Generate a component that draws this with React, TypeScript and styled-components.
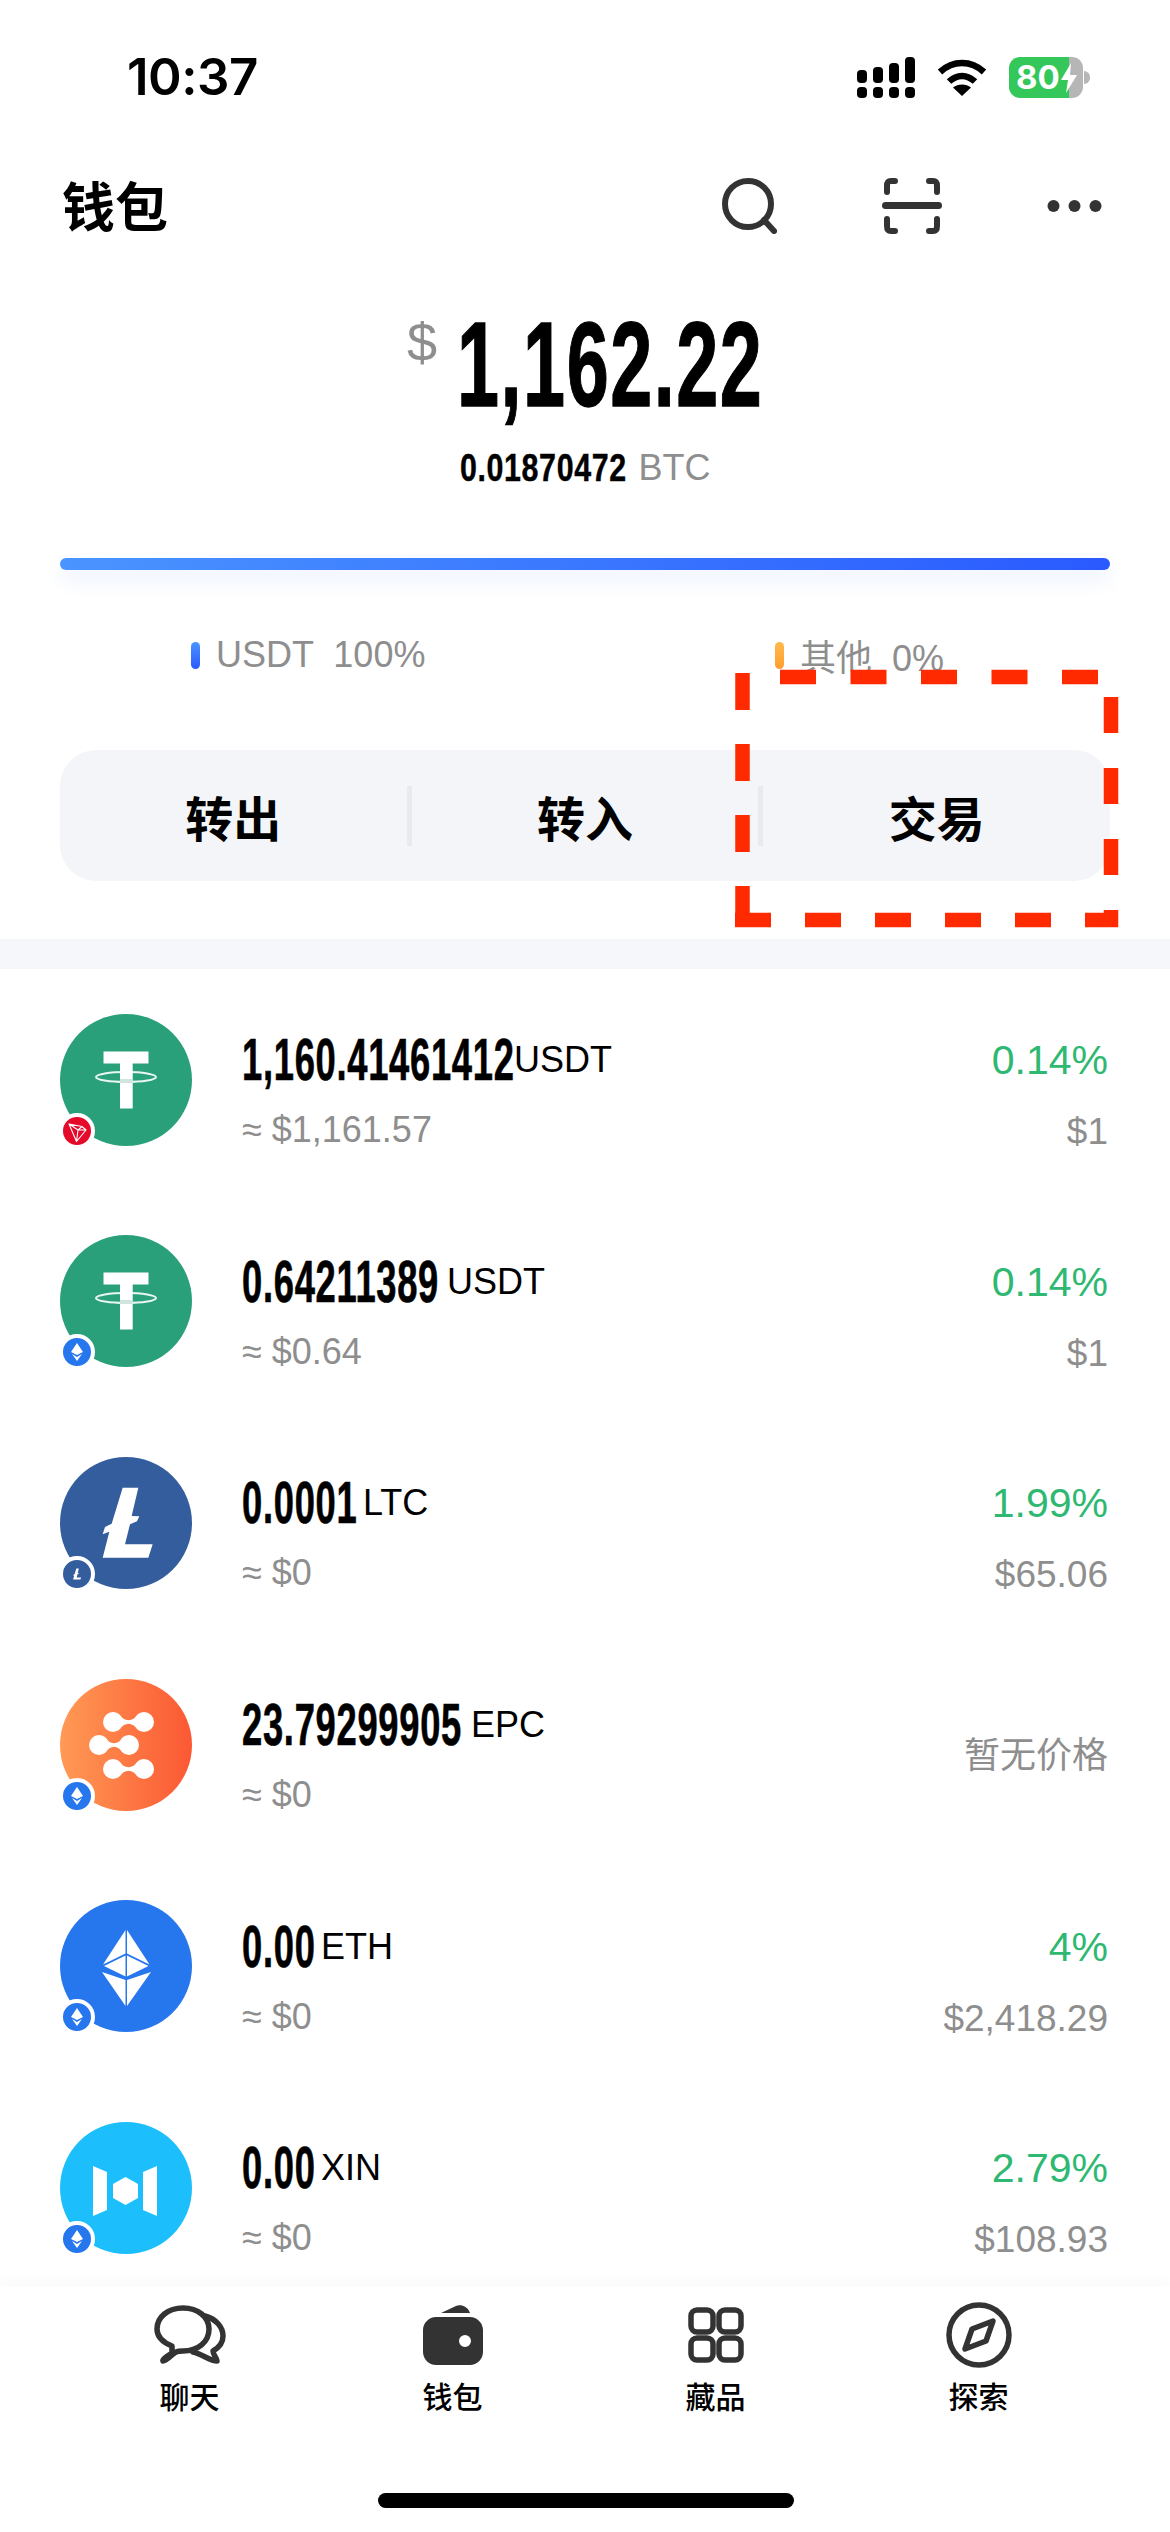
import React from "react";
import styled, { createGlobalStyle } from "styled-components";

const Global = createGlobalStyle`
  html, body { margin: 0; padding: 0; background: #fff; }
  body { font-family: "Liberation Sans", "Noto Sans CJK SC", sans-serif; }
`;

const Page = styled.div`
  position: relative;
  width: 1170px;
  height: 2532px;
  display: flex;
  flex-direction: column;
  overflow: hidden;
  background: #fff;
`;
const StatusBar = styled.div`
  height: 154px;
  flex: none;
  box-sizing: border-box;
  padding: 50px 80px 0 127px;
  display: flex;
  justify-content: space-between;
  align-items: flex-start;
`;
const Time = styled.div`
  font-family: Inter, "Liberation Sans", sans-serif;
  font-size: 51px;
  font-weight: 600;
  line-height: 54px;
  color: #000;
  letter-spacing: -0.5px;
`;
const StatusIcons = styled.div`
  height: 54px;
  display: flex;
  align-items: center;
  gap: 22px;
`;
const Battery = styled.div`
  position: relative;
  width: 74px;
  height: 41px;
  margin-right: 7px;
  border-radius: 11px;
  background: linear-gradient(90deg, #34c759 0 60px, #b6b6b6 60px);
  color: #fff;
  font-family: Inter, "Liberation Sans", sans-serif;
  font-weight: 700;
  font-size: 33px;
  line-height: 41px;
  padding-left: 7px;
  box-sizing: border-box;
  &::after {
    content: "";
    position: absolute;
    right: -7px;
    top: 14px;
    width: 6px;
    height: 13px;
    border-radius: 0 6px 6px 0;
    background: #b6b6b6;
  }
  svg { position: absolute; left: 50px; top: 6px; }
`;
const Header = styled.div`
  height: 104px;
  flex: none;
  box-sizing: border-box;
  padding: 0 68px 0 62px;
  display: flex;
  align-items: center;
  justify-content: space-between;
`;
const Title = styled.div`
  font-size: 53px;
  font-weight: 700;
  color: #000;
  margin-top: -5px;
`;
const HeaderActions = styled.div`
  display: flex;
  align-items: center;
  gap: 105px;
`;
const Balance = styled.div`
  display: flex;
  justify-content: center;
  gap: 20px;
  margin-top: 46px;
  height: 104px;
`;
const Currency = styled.div`
  font-size: 54px;
  line-height: 60px;
  color: #8e8e8e;
  margin-top: 8px;
`;
const Condensed = styled.div<{ $w: number; $scale: number; $size: number }>`
  width: ${(p) => p.$w}px;
  flex: none;
  font-family: "Liberation Sans", sans-serif;
  font-weight: 700;
  font-size: ${(p) => p.$size}px;
  line-height: 1;
  letter-spacing: 0.02em;
  color: #000;
  white-space: nowrap;
  transform: scaleX(${(p) => p.$scale});
  transform-origin: left center;
  -webkit-text-stroke: ${(p) => p.$size / 90}px #000;
`;
const BalanceSub = styled.div`
  display: flex;
  justify-content: center;
  align-items: center;
  gap: 12px;
  margin-top: 40px;
  height: 40px;
`;
const BtcUnit = styled.span`
  font-size: 36px;
  color: #8e8e8e;
`;
const Progress = styled.div`
  height: 12px;
  margin: 70px 60px 0;
  border-radius: 6px;
  background: linear-gradient(90deg, #4a94ff, #2a5aff);
  box-shadow: 0 10px 18px rgba(60, 110, 255, 0.1);
  flex: none;
`;
const Legend = styled.div`
  display: flex;
  margin-top: 65px;
  height: 40px;
  padding-left: 191px;
  align-items: center;
`;
const LegendItem = styled.div<{ $w: number }>`
  width: ${(p) => p.$w}px;
  display: flex;
  align-items: center;
  gap: 16px;
  font-size: 36px;
  color: #8e8e8e;
  white-space: pre;
`;
const LegendMark = styled.i<{ $from: string; $to: string }>`
  display: block;
  width: 9px;
  height: 27px;
  border-radius: 5px;
  background: linear-gradient(180deg, ${(p) => p.$from}, ${(p) => p.$to});
`;
const Actions = styled.div`
  height: 131px;
  flex: none;
  margin: 75px 60px 0;
  border-radius: 36px;
  background: #f3f5f8;
  display: flex;
  align-items: center;
`;
const ActionItem = styled.div`
  flex: 1;
  text-align: center;
  font-size: 48px;
  font-weight: 700;
  color: #000;
`;
const ActionDivider = styled.div`
  width: 5px;
  height: 60px;
  background: #e8eaee;
`;
const Band = styled.div`
  height: 30px;
  flex: none;
  margin-top: 58px;
  background: #f6f7fa;
`;
const List = styled.div`
  flex: 1;
  min-height: 0;
  overflow: hidden;
`;
const Row = styled.div`
  height: 221.67px;
  box-sizing: border-box;
  padding: 0 62px 0 60px;
  display: flex;
  align-items: center;
`;
const AvatarWrap = styled.div`
  position: relative;
  width: 132px;
  height: 132px;
  flex: none;
  margin-right: 50px;
`;
const AvatarDisc = styled.svg`
  display: block;
  width: 132px;
  height: 132px;
  border-radius: 50%;
`;
const Badge = styled.div<{ $bg: string }>`
  position: absolute;
  left: -1px;
  top: 99px;
  width: 28px;
  height: 28px;
  box-sizing: content-box;
  border: 4px solid #fff;
  border-radius: 50%;
  background: ${(p) => p.$bg};
  svg { display: block; width: 28px; height: 28px; }
`;
const Info = styled.div`
  flex: 1;
  align-self: flex-start;
  padding-top: 66px;
`;
const AmountLine = styled.div`
  height: 50px;
  display: flex;
  align-items: center;
  gap: 6px;
`;
const Unit = styled.span`
  font-size: 36px;
  color: #000;
`;
const Fiat = styled.div`
  margin-top: 25px;
  height: 40px;
  line-height: 40px;
  font-size: 36px;
  color: #8e8e8e;
`;
const Price = styled(Fiat)`
  margin-top: 27px;
  font-size: 37px;
`;
const Quote = styled.div`
  align-self: flex-start;
  padding-top: 66px;
  text-align: right;
`;
const Change = styled.div`
  height: 50px;
  line-height: 50px;
  font-size: 41px;
  color: #2eb872;
`;
const NoPrice = styled.div`
  margin-top: 31px;
  height: 50px;
  line-height: 50px;
  font-size: 36px;
  color: #8e8e8e;
`;
const TabBar = styled.div`
  position: relative;
  flex: none;
  height: 246px;
  box-sizing: border-box;
  background: #fff;
  box-shadow: 0 -6px 14px rgba(0, 0, 0, 0.025);
  padding: 16px 60px 0 58px;
  display: flex;
  flex-direction: column;
`;
const Tabs = styled.div`
  display: grid;
  grid-template-columns: repeat(4, 1fr);
  justify-items: center;
`;
const Tab = styled.div`
  display: flex;
  flex-direction: column;
  align-items: center;
  gap: 10px;
`;
const TabIcon = styled.div`
  height: 66px;
  display: flex;
  align-items: center;
  justify-content: center;
`;
const TabLabel = styled.div`
  font-size: 30px;
  line-height: 40px;
  font-weight: 500;
  color: #000;
`;
const HomeBar = styled.div`
  align-self: center;
  width: 416px;
  height: 15px;
  margin-top: 75px;
  margin-left: 4px;
  border-radius: 8px;
  background: #000;
`;
const Highlight = styled.svg`
  position: absolute;
  left: 730px;
  top: 665px;
  width: 395px;
  height: 270px;
`;

const Signal = () => (
  <svg width="58" height="41" viewBox="0 0 58 41" fill="#000">
    {[0, 16, 32, 48].map((x) => (
      <rect key={x} x={x} y="30" width="10" height="11" rx="4" />
    ))}
    <rect x="0" y="13" width="10" height="13" rx="4" />
    <rect x="16" y="10" width="10" height="16" rx="4" />
    <rect x="32" y="6" width="10" height="20" rx="4" />
    <rect x="48" y="0" width="10" height="26" rx="4" />
  </svg>
);
const Wifi = () => (
  <svg width="50" height="38" viewBox="0 0 50 38" fill="none">
    <path d="M3 14C16 2 34 2 47 14" stroke="#000" strokeWidth="6.5" />
    <path d="M12 23.5C20 16 30 16 38 23.5" stroke="#000" strokeWidth="6.5" />
    <path d="M25 38L16 29.5C21 25.5 29 25.5 34 29.5Z" fill="#000" />
  </svg>
);
const Search = () => (
  <svg width="56" height="56" viewBox="0 0 56 56" fill="none" stroke="#333" strokeWidth="6" strokeLinecap="round">
    <circle cx="27" cy="26" r="23" />
    <path d="M43 42L53 53" />
  </svg>
);
const Scan = () => (
  <svg width="60" height="56" viewBox="0 0 60 56" fill="none" stroke="#333" strokeWidth="6" strokeLinecap="round">
    <path d="M13 3H9C6 3 5 5 5 8V14" />
    <path d="M47 3H51C54 3 55 5 55 8V14" />
    <path d="M5 41V48C5 51 6 53 9 53H13" />
    <path d="M55 41V48C55 51 54 53 51 53H47" />
    <path d="M3.5 27.5H56.5" strokeWidth="7" />
  </svg>
);
const Dots = () => (
  <svg width="55" height="14" viewBox="0 0 55 14" fill="#333">
    <circle cx="6.5" cy="7" r="6" />
    <circle cx="27.5" cy="7" r="6" />
    <circle cx="48.5" cy="7" r="6" />
  </svg>
);
const ChatIcon = () => (
  <svg width="72" height="60" viewBox="0 0 72 60" fill="none" stroke="#333" strokeWidth="5.5" strokeLinecap="round" strokeLinejoin="round">
    <path d="M18 41C8 37 3 31 3 24C3 12 14 3 29 3C44 3 55 12 55 24C55 37 44 46 29 46C26 46 24 46 22 47C18 49 13 56 9 56C8 54 14 51 18 48Z" />
    <path d="M51 11C62 14 69 22 69 31C69 37 66 42 59 46C59 50 63 53 63 56C56 56 48 49 39 47" />
  </svg>
);
const WalletIcon = () => (
  <svg width="60" height="60" viewBox="0 0 60 60">
    <path d="M18 8L33 1C37 -1 45 1 47 8Z" fill="#333" />
    <path fillRule="evenodd" d="M13 12H47C54 12 60 18 60 25V47C60 54 54 60 47 60H13C6 60 0 54 0 47V25C0 18 6 12 13 12ZM36 36A6 6 0 1 0 48 36A6 6 0 1 0 36 36Z" fill="#333" />
  </svg>
);
const GridIcon = () => (
  <svg width="56" height="56" viewBox="0 0 56 56" fill="none" stroke="#333" strokeWidth="5.5">
    <rect x="3" y="3" width="22" height="22" rx="6" />
    <rect x="31" y="3" width="22" height="22" rx="6" />
    <rect x="3" y="31" width="22" height="22" rx="6" />
    <rect x="31" y="31" width="22" height="22" rx="6" />
  </svg>
);
const CompassIcon = () => (
  <svg width="66" height="66" viewBox="0 0 66 66" fill="none" stroke="#333" strokeWidth="5.5" strokeLinejoin="round">
    <circle cx="33" cy="33" r="30" />
    <path d="M47 19L40 39L19 47L26 27Z" />
  </svg>
);

const Tether = () => (
  <AvatarDisc viewBox="0 0 132 132">
    <rect width="132" height="132" fill="#2aa07a" />
    <path d="M43.5 37.5H88.5V49.5H72.7V94.5H60V49.5H43.5Z" fill="#fff" />
    <ellipse cx="66" cy="63" rx="30" ry="5" fill="none" stroke="#fff" strokeWidth="2" opacity="0.9" />
    <rect x="60" y="65" width="12.7" height="4" fill="#cfe5dd" />
  </AvatarDisc>
);
const LTC_PATH =
  "M248 140H295L275 225L298 226L291 241L270 250L255 310H338L325 350H188L208 272L188 280L195 258L215 248Z";
const Litecoin = () => (
  <AvatarDisc viewBox="60 48 396 396">
    <rect x="60" y="48" width="396" height="396" fill="#345d9d" />
    <path d={LTC_PATH} fill="#fff" />
  </AvatarDisc>
);
const EpcBlob = ({ x1, x2, y }: { x1: number; x2: number; y: number }) => (
  <>
    <circle cx={x1} cy={y} r="10" fill="#fff" />
    <circle cx={x2} cy={y} r="10" fill="#fff" />
    <path d={`M${x1 + 5} ${y - 8.5}Q${(x1 + x2) / 2} ${y + 5} ${x2 - 5} ${y - 8.5}V${y + 8.5}Q${(x1 + x2) / 2} ${y - 5} ${x1 + 5} ${y + 8.5}Z`} fill="#fff" />
  </>
);
const Epc = () => (
  <AvatarDisc viewBox="0 0 132 132">
    <defs>
      <linearGradient id="epc" x1="0" x2="1" y1="0" y2="0">
        <stop offset="0" stopColor="#ff9a55" />
        <stop offset="1" stopColor="#fb5833" />
      </linearGradient>
    </defs>
    <rect width="132" height="132" fill="url(#epc)" />
    <EpcBlob x1={53} x2={84} y={43} />
    <EpcBlob x1={39} x2={69} y={66} />
    <EpcBlob x1={53} x2={84} y={90} />
  </AvatarDisc>
);
const Eth = () => (
  <AvatarDisc viewBox="0 0 132 132">
    <rect width="132" height="132" fill="#2676ee" />
    <g fill="#fff">
      <path d="M65.5 30V53.5L43 64.5Z" />
      <path d="M67 30V53.5L89.5 64.5Z" />
      <path d="M65.5 55.5V76.5L44 66Z" />
      <path d="M67 55.5V76.5L88.5 66Z" />
      <path d="M65.5 80V106L42 72Z" />
      <path d="M67 80V106L91 72Z" />
    </g>
  </AvatarDisc>
);
const Xin = () => (
  <AvatarDisc viewBox="0 0 132 132">
    <rect width="132" height="132" fill="#1cbffb" />
    <g fill="#fff">
      <path d="M33 44L47 50V88L33 94Z" />
      <path d="M97 44L83 50V88L97 94Z" />
      <path d="M65.5 55L78 62V76L65.5 83L53 76V62Z" />
    </g>
  </AvatarDisc>
);

const TronBadge = () => (
  <Badge $bg="#e5092a">
    <svg viewBox="0 0 28 28" fill="none" stroke="#fff" strokeWidth="1.1" strokeLinejoin="round">
      <path d="M6 7L19 9.5L23 13L13.5 24.5ZM6 7L15 13L23 13M15 13L13.5 24.5M15 13L19 9.5" />
    </svg>
  </Badge>
);
const EthBadge = () => (
  <Badge $bg="#2676ee">
    <svg viewBox="0 0 28 28" fill="#fff">
      <path d="M14 5L20 14L14 17L8 14Z" />
      <path d="M9 16L14 19L19 16L14 23Z" />
    </svg>
  </Badge>
);
const LtcBadge = () => (
  <Badge $bg="#345d9d">
    <svg viewBox="63 53 396 396">
      <path d={LTC_PATH} fill="#fff" transform="translate(261 251) scale(.75) translate(-261 -245)" />
    </svg>
  </Badge>
);

type Coin = {
  avatar: React.ReactNode;
  badge: React.ReactNode;
  amount: string;
  width: number;
  unit: string;
  fiat: string;
  change?: string;
  price?: string;
};
const coins: Coin[] = [
  { avatar: <Tether />, badge: <TronBadge />, amount: "1,160.41461412", width: 266, unit: "USDT", fiat: "≈ $1,161.57", change: "0.14%", price: "$1" },
  { avatar: <Tether />, badge: <EthBadge />, amount: "0.64211389", width: 199, unit: "USDT", fiat: "≈ $0.64", change: "0.14%", price: "$1" },
  { avatar: <Litecoin />, badge: <LtcBadge />, amount: "0.0001", width: 115, unit: "LTC", fiat: "≈ $0", change: "1.99%", price: "$65.06" },
  { avatar: <Epc />, badge: <EthBadge />, amount: "23.79299905", width: 223, unit: "EPC", fiat: "≈ $0" },
  { avatar: <Eth />, badge: <EthBadge />, amount: "0.00", width: 73, unit: "ETH", fiat: "≈ $0", change: "4%", price: "$2,418.29" },
  { avatar: <Xin />, badge: <EthBadge />, amount: "0.00", width: 73, unit: "XIN", fiat: "≈ $0", change: "2.79%", price: "$108.93" },
];

export default function App() {
  return (
    <Page>
      <Global />
      <StatusBar>
        <Time>10:37</Time>
        <StatusIcons>
          <Signal />
          <Wifi />
          <Battery>
            80
            <svg width="20" height="30" viewBox="0 0 20 30" fill="#fff">
              <path d="M12 0L2 17H9L7 30L18 12H11Z" />
            </svg>
          </Battery>
        </StatusIcons>
      </StatusBar>
      <Header>
        <Title>钱包</Title>
        <HeaderActions>
          <Search />
          <Scan />
          <Dots />
        </HeaderActions>
      </Header>
      <Balance>
        <Currency>$</Currency>
        <Condensed $w={306} $scale={0.63} $size={120}>1,162.22</Condensed>
      </Balance>
      <BalanceSub>
        <Condensed $w={167} $scale={0.8} $size={38}>0.01870472</Condensed>
        <BtcUnit>BTC</BtcUnit>
      </BalanceSub>
      <Progress />
      <Legend>
        <LegendItem $w={584}>
          <LegendMark $from="#4a94ff" $to="#2a5aff" />
          {"USDT  100%"}
        </LegendItem>
        <LegendItem $w={200}>
          <LegendMark $from="#ffb84d" $to="#ff9f2e" />
          {"其他  0%"}
        </LegendItem>
      </Legend>
      <Actions>
        <ActionItem>转出</ActionItem>
        <ActionDivider />
        <ActionItem>转入</ActionItem>
        <ActionDivider />
        <ActionItem>交易</ActionItem>
      </Actions>
      <Band />
      <List>
        {coins.map((c, i) => (
          <Row key={i}>
            <AvatarWrap>
              {c.avatar}
              {c.badge}
            </AvatarWrap>
            <Info>
              <AmountLine>
                <Condensed $w={c.width} $scale={0.605} $size={60}>{c.amount}</Condensed>
                <Unit>{c.unit}</Unit>
              </AmountLine>
              <Fiat>{c.fiat}</Fiat>
            </Info>
            {c.change ? (
              <Quote>
                <Change>{c.change}</Change>
                <Price>{c.price}</Price>
              </Quote>
            ) : (
              <Quote>
                <NoPrice>暂无价格</NoPrice>
              </Quote>
            )}
          </Row>
        ))}
      </List>
      <TabBar>
        <Tabs>
          <Tab><TabIcon><ChatIcon /></TabIcon><TabLabel>聊天</TabLabel></Tab>
          <Tab><TabIcon><WalletIcon /></TabIcon><TabLabel>钱包</TabLabel></Tab>
          <Tab><TabIcon><GridIcon /></TabIcon><TabLabel>藏品</TabLabel></Tab>
          <Tab><TabIcon><CompassIcon /></TabIcon><TabLabel>探索</TabLabel></Tab>
        </Tabs>
        <HomeBar />
      </TabBar>
      <Highlight viewBox="730 665 395 270" fill="none" stroke="#ff2a00" strokeWidth="14.5">
        <path d="M742.5 673V927" strokeDasharray="37 34" />
        <path d="M735 920H1118" strokeDasharray="36 34" />
        <path d="M1111 697V927" strokeDasharray="36 35" />
        <path d="M780 677H1100" strokeDasharray="36 34.5" />
      </Highlight>
    </Page>
  );
}
